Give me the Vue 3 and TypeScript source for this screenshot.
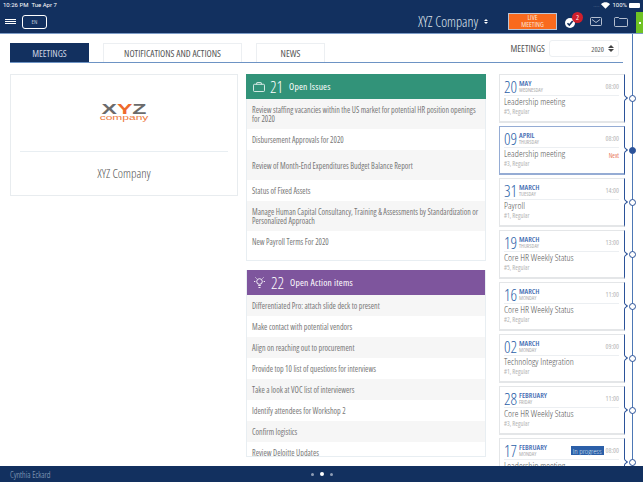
<template>
  <div class="screen">
    <header class="topbar">
      <div class="status">
        <span>10:26 PM&nbsp;&nbsp;Tue Apr 7</span>
        <span class="status-right">
          <span class="signal">....</span>
          <svg width="9" height="7" viewBox="0 0 11 8"><path d="M5.500 8 0 2.400C3.200-.7 7.800-.7 11 2.400z" fill="#fff" /></svg>
          <span>100%</span>
          <span class="battery"></span>
        </span>
      </div>
      <div class="nav">
        <div class="burger"><i></i><i></i><i></i></div>
        <div class="lang">EN</div>
        <div class="company">XYZ Company <span class="updown"><b></b><b class="down"></b></span></div>
        <div class="live">LIVE<br>MEETING</div>
        <div class="check">
          <svg width="10" height="10" viewBox="0 0 13 13"><circle cx="6.500" cy="6.500" r="6.500" fill="#fff" /><path d="M3.200 6.800 5.600 9.200 10 3.800" fill="none" stroke="#12305f" stroke-width="2" /></svg>
          <span class="badge">2</span>
        </div>
        <svg class="mail" width="12" height="9" viewBox="0 0 12 9"><rect x=".5" y=".5" width="11" height="8" rx="1" fill="none" stroke="#dfe5ee" stroke-width=".8" /><path d="M2 2.500 6 5.500 10 2.500" fill="none" stroke="#dfe5ee" stroke-width=".8" /></svg>
        <svg class="folder" width="14" height="10" viewBox="0 0 14 10"><path d="M.5 2.500V1.500q0-1 1-1h3l1 1h7q1 0 1 1v6q0 1-1 1h-11q-1 0-1-1z" fill="none" stroke="#dfe5ee" stroke-width=".8" /></svg>
        <div class="green-tab"><i></i></div>
      </div>
    </header>

    <main class="page">
      <div class="content">
        <div class="tabbar">
          <button class="tab active" style="width: 79px">MEETINGS</button>
          <button class="tab" style="width: 139px">NOTIFICATIONS AND ACTIONS</button>
          <button class="tab" style="width: 69px">NEWS</button>
          <div class="year-filter">
            <span>MEETINGS</span>
            <div class="year">2020 <span class="updown dark"><b></b><b class="down"></b></span></div>
          </div>
        </div>

        <div class="columns">
          <section class="company-card">
            <div class="logo">
              <div class="logo-xyz">X<em>Y</em>Z</div>
              <div class="logo-sub">company</div>
            </div>
            <div class="company-name">XYZ Company</div>
          </section>

          <section class="lists">
            <div class="panel issues">
              <div class="panel-head green">
                <svg width="12" height="10" viewBox="0 0 13 11"><path d="M4 2.500V1q0-.5.5-.5h4q.5 0 .5.5v1.500M1.500 2.500h10q1 0 1 1v6q0 1-1 1h-10q-1 0-1-1v-6q0-1 1-1z" fill="none" stroke="#fff" stroke-width=".9" /></svg>
                <span class="count">21</span>
                <span class="panel-title">Open Issues</span>
              </div>
              <div v-for="item in issues" :key="item" class="row issue-row">{{ item }}</div>
            </div>

            <div class="panel actions">
              <div class="panel-head purple">
                <svg width="13" height="13" viewBox="0 0 13 13"><circle cx="6.500" cy="5.500" r="2.800" fill="none" stroke="#fff" stroke-width=".9" /><path d="M5.200 9.500h2.600M5.500 11.500h2M1 5.500h1.300M10.700 5.500H12M2.500 1.500l1 1M10.500 1.500l-1 1" stroke="#fff" stroke-width=".9" fill="none" /></svg>
                <span class="count">22</span>
                <span class="panel-title">Open Action items</span>
              </div>
              <div v-for="item in actions" :key="item" class="row action-row">{{ item }}</div>
            </div>
          </section>

          <section class="meetings">
            <div v-for="m in meetings" :key="m.day + m.month" class="meeting" :class="{ selected: m.selected }">
              <div class="meeting-top">
                <span class="day">{{ m.day }}</span>
                <span class="month-wrap">
                  <span class="month">{{ m.month }}</span>
                  <span class="weekday">{{ m.weekday }}</span>
                </span>
                <span v-if="m.progress" class="progress">In progress</span>
                <span class="time">{{ m.time }}</span>
              </div>
              <div class="meeting-title">{{ m.title }}</div>
              <div class="meeting-sub">
                <span>{{ m.sub }}</span>
                <span v-if="m.selected" class="next">Next</span>
              </div>
              <span class="notch"></span>
              <span class="dot" :class="{ filled: m.selected }"></span>
            </div>
          </section>
        </div>
      </div>
      <div class="timeline"></div>
    </main>

    <footer class="footer">
      <span class="user">Cynthia Eckard</span>
      <div class="pager"><i></i><i class="on"></i><i></i></div>
    </footer>
  </div>
</template>

<script setup lang="ts">
const issues = [
  'Review staffing vacancies within the US market for potential HR position openings for 2020',
  'Disbursement Approvals for 2020',
  'Review of Month-End Expenditures Budget Balance Report',
  'Status of Fixed Assets',
  'Manage Human Capital Consultancy, Training & Assessments by Standardization or Personalized Approach',
  'New Payroll Terms For 2020',
]

const actions = [
  'Differentiated Pro: attach slide deck to present',
  'Make contact with potential vendors',
  'Align on reaching out to procurement',
  'Provide top 10 list of questions for interviews',
  'Take a look at VOC list of interviewers',
  'Identify attendees for Workshop 2',
  'Confirm logistics',
  'Review Deloitte Updates',
]

const meetings = [
  { day: '20', month: 'MAY', weekday: 'WEDNESDAY', time: '08:00', title: 'Leadership meeting', sub: '#5, Regular' },
  { day: '09', month: 'APRIL', weekday: 'THURSDAY', time: '08:00', title: 'Leadership meeting', sub: '#3, Regular', selected: true },
  { day: '31', month: 'MARCH', weekday: 'TUESDAY', time: '14:00', title: 'Payroll', sub: '#1, Regular' },
  { day: '19', month: 'MARCH', weekday: 'THURSDAY', time: '13:00', title: 'Core HR Weekly Status', sub: '#5, Regular' },
  { day: '16', month: 'MARCH', weekday: 'MONDAY', time: '11:00', title: 'Core HR Weekly Status', sub: '#2, Regular' },
  { day: '02', month: 'MARCH', weekday: 'MONDAY', time: '09:00', title: 'Technology Integration', sub: '#1, Regular' },
  { day: '28', month: 'FEBRUARY', weekday: 'FRIDAY', time: '11:00', title: 'Core HR Weekly Status', sub: '#3, Regular' },
  { day: '17', month: 'FEBRUARY', weekday: 'MONDAY', time: '08:00', title: 'Leadership meeting', sub: '#1, Regular', progress: true },
]
</script>

<style>
html, body {
  margin: 0;
  background: #fff;
  overflow: hidden;
}
</style>

<style scoped>
.screen {
  width: 643px;
  height: 482px;
  display: flex;
  flex-direction: column;
  overflow: hidden;
  font-family: "Open Sans", "Roboto", sans-serif;
  font-stretch: 75%;
  font-weight: 300;
  color: #555;
  font-size: 10px;
}

.topbar {
  height: 33px;
  flex: none;
  background: #12305f;
  border-bottom: 1px solid #7d9cc7;
  color: #fff;
}

.status {
  height: 10px;
  padding: 0 3px;
  display: flex;
  justify-content: space-between;
  font-family: "Roboto", sans-serif;
  font-stretch: 100%;
  font-weight: 400;
  font-size: 6px;
  line-height: 10px;
}

.status-right {
  display: flex;
  align-items: center;
  gap: 2px;
}

.signal {
  color: #7688a5;
}

.battery {
  width: 11px;
  height: 5px;
  background: #fff;
  border-radius: 1px;
}

.nav {
  height: 23px;
  display: flex;
  align-items: center;
  padding-left: 5px;
}

.burger {
  width: 11px;
  display: flex;
  flex-direction: column;
  gap: 1px;
}

.burger i {
  height: 1px;
  background: #fff;
}

.lang {
  width: 23px;
  height: 12px;
  margin-left: 6px;
  border: 1px solid #fff;
  border-radius: 3px;
  font-size: 6px;
  font-weight: 400;
  line-height: 12px;
  text-align: center;
  color: #b9c4d6;
}

.company {
  margin-left: 371px;
  width: 88px;
  font-size: 14px;
  white-space: nowrap;
  display: flex;
  align-items: center;
  gap: 6px;
  color: #dfe4ec;
}

.updown {
  display: inline-flex;
  flex-direction: column;
  gap: 1px;
}

.updown b {
  width: 0;
  height: 0;
  border: 2px solid transparent;
  border-top: 0;
  border-bottom: 2px solid #fff;
}

.updown b.down {
  border-bottom: 0;
  border-top: 2px solid #fff;
}

.updown.dark b {
  border-left-width: 3px;
  border-right-width: 3px;
  border-bottom: 3px solid #444;
}

.updown.dark b.down {
  border-bottom: 0;
  border-top: 3px solid #444;
}

.live {
  margin-left: 2px;
  width: 47px;
  height: 14px;
  padding-bottom: 1px;
  background: #f96a1d;
  border: 1px solid #b9c6d9;
  font-size: 7px;
  font-weight: 400;
  line-height: 7px;
  text-align: center;
  color: #fde3d2;
}

.check {
  position: relative;
  margin-left: 8px;
  width: 13px;
  height: 10px;
}

.badge {
  position: absolute;
  left: 7px;
  top: -5px;
  width: 11px;
  height: 11px;
  border-radius: 50%;
  background: #cf1f2c;
  font-size: 7px;
  font-weight: 400;
  line-height: 11px;
  text-align: center;
}

.mail {
  margin-left: 12px;
}

.folder {
  margin-left: 12px;
}

.green-tab {
  width: 7px;
  height: 21px;
  margin-left: 8px;
  align-self: flex-end;
  background: #6fc324;
  display: flex;
  align-items: center;
  justify-content: center;
}

.green-tab i {
  width: 2px;
  height: 2px;
  background: #fff;
}

.page {
  flex: 1;
  min-height: 0;
  display: flex;
  overflow: hidden;
}

.content {
  width: 632px;
  flex: none;
  padding: 9px 0 0 10px;
  box-sizing: border-box;
}

.tabbar {
  width: 613px;
  height: 20px;
  display: flex;
  box-sizing: border-box;
  border-bottom: 1px solid #6d93c4;
  gap: 14px;
}

.tab {
  padding: 0;
  background: #fff;
  border: 1px solid #eceff2;
  border-bottom: 0;
  font: inherit;
  font-size: 9.500px;
  font-weight: 400;
  color: #555;
}

.tab.active {
  background: #12305f;
  border-color: #12305f;
  color: #cfd6e2;
}

.year-filter {
  margin-left: auto;
  margin-right: 4px;
  display: flex;
  gap: 4px;
  align-items: flex-start;
}

.year-filter > span {
  font-size: 9.500px;
  font-weight: 400;
  color: #555;
  line-height: 13px;
  margin-top: -1px;
}

.year {
  width: 70px;
  height: 17px;
  margin-top: -3px;
  box-sizing: border-box;
  border: 1px solid #eceff2;
  border-radius: 3px;
  padding-right: 4px;
  display: flex;
  align-items: center;
  justify-content: flex-end;
  gap: 4px;
  font-size: 7.500px;
  font-weight: 400;
}

.columns {
  display: flex;
  align-items: flex-start;
  margin-top: 11px;
}

.company-card {
  width: 228px;
  height: 122px;
  flex: none;
  box-sizing: border-box;
  border: 1px solid #e8ecef;
  padding: 29px 9px 0;
  text-align: center;
}

.logo {
  height: 47px;
  border-bottom: 1px solid #e8eef2;
}

.logo-xyz {
  font-family: "Liberation Sans", sans-serif;
  font-stretch: 100%;
  font-weight: 700;
  font-size: 14px;
  line-height: 11px;
  transform: scaleX(1.650);
  color: #6b6b6b;
}

.logo-xyz em {
  font-style: normal;
  color: #ee6a2c;
}

.logo-sub {
  font-family: "Liberation Sans", sans-serif;
  font-stretch: 100%;
  font-weight: 400;
  font-size: 7.500px;
  line-height: 6px;
  transform: scaleX(1.600);
  color: #ee7a3c;
}

.company-name {
  margin-top: 14px;
  font-size: 12.500px;
  line-height: 15px;
  color: #555;
}

.lists {
  width: 240px;
  margin-left: 8px;
  flex: none;
}

.panel {
  box-sizing: border-box;
  border: 1px solid #e8eef2;
  border-top: 0;
}

.issues {
  height: 187px;
}

.panel-head {
  height: 25px;
  margin: 0 -1px;
  padding-left: 7px;
  display: flex;
  align-items: center;
  color: #fff;
}

.panel-head.green {
  background: #329379;
}

.panel-head.purple {
  background: #7e559d;
}

.count {
  margin-left: 5px;
  font-size: 16px;
}

.panel-title {
  margin-left: 6px;
  font-size: 9.500px;
  font-weight: 400;
  letter-spacing: .2px;
}

.row {
  padding: 0 5px;
  display: flex;
  align-items: center;
  font-size: 8px;
  font-weight: 400;
  line-height: 9px;
  color: #777;
}

.issue-row {
  height: 21px;
}

.issue-row:nth-child(even) {
  height: 30px;
  background: #f6f6f6;
}

.actions {
  margin-top: 9px;
  height: 187px;
  overflow: hidden;
}

.action-row {
  height: 21px;
}

.action-row:nth-child(even) {
  background: #f6f6f6;
}

.meetings {
  margin-left: 13px;
  width: 126px;
  flex: none;
  display: flex;
  flex-direction: column;
  gap: 3px;
}

.meeting {
  position: relative;
  height: 49px;
  box-sizing: border-box;
  padding: 3px 5px 0 4px;
  border: 1px solid #e4e6e8;
  border-bottom-width: 2px;
  border-right: 1px solid #2b5299;
  background: #fff;
}

.meeting.selected {
  border-color: #95acd4;
  border-right-color: #2b5299;
}

.meeting-top {
  height: 17px;
  display: flex;
  align-items: center;
  border-bottom: 1px solid #eceff2;
}

.day {
  font-size: 16px;
  line-height: 16px;
  color: #2b5fa8;
  margin-right: 2px;
}

.month-wrap {
  display: flex;
  flex-direction: column;
}

.month {
  font-size: 7.500px;
  line-height: 7px;
  font-weight: 600;
  color: #3f6cb2;
}

.weekday {
  font-size: 5.500px;
  font-weight: 400;
  line-height: 6px;
  color: #aaa;
}

.progress {
  margin-left: auto;
  background: #2b5fa8;
  color: #dfe7f3;
  padding: 0 2px;
  font-size: 8px;
  line-height: 9px;
  white-space: nowrap;
}

.time {
  margin-left: auto;
  font-size: 7px;
  font-weight: 400;
  color: #b5b5b5;
}

.progress + .time {
  margin-left: 2px;
}

.meeting-title {
  font-size: 9.500px;
  line-height: 12px;
  color: #555;
}

.meeting-sub {
  display: flex;
  justify-content: space-between;
  font-size: 6.500px;
  font-weight: 400;
  line-height: 7px;
  color: #b3b3b3;
}

.next {
  color: #e8795e;
  margin-top: -8px;
}

.notch {
  position: absolute;
  right: -3px;
  top: 21px;
  width: 3px;
  height: 3px;
  border-top: 1px solid #2b5299;
  border-right: 1px solid #2b5299;
  transform: rotate(45deg);
  background: #fff;
}

.dot {
  position: absolute;
  right: -12px;
  top: 20px;
  width: 5px;
  height: 5px;
  border: 1.500px solid #2b5299;
  border-radius: 50%;
  background: #fff;
  z-index: 1;
}

.dot.filled {
  background: #2b5299;
}

.timeline {
  width: 1px;
  flex: none;
  background: #4d78b5;
}

.footer {
  height: 16px;
  flex: none;
  background: #12305f;
  position: relative;
  display: flex;
  align-items: center;
  padding-left: 10px;
  color: #9fb0c9;
  font-size: 8.500px;
}

.pager {
  position: absolute;
  left: 311px;
  top: 0;
  height: 16px;
  display: flex;
  align-items: center;
  gap: 6px;
}

.pager i {
  width: 3px;
  height: 3px;
  border-radius: 50%;
  background: #8e9db5;
}

.pager i.on {
  width: 4px;
  height: 4px;
  background: #fff;
}
</style>
